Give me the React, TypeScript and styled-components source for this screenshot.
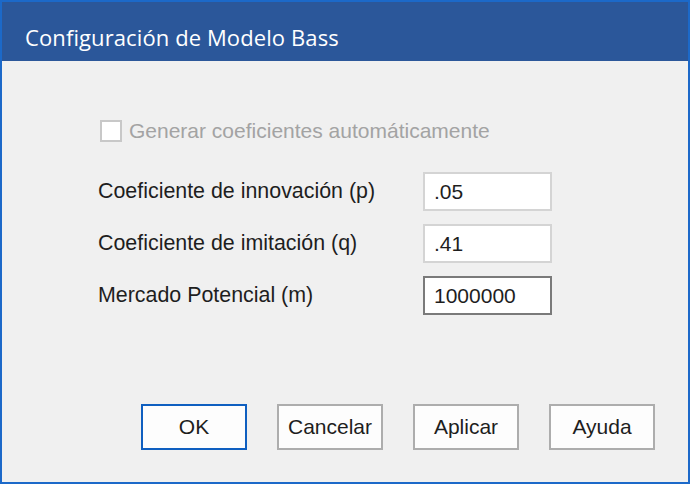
import React, { useState } from 'react'
import styled, { createGlobalStyle } from 'styled-components'

const GlobalStyle = createGlobalStyle`
  html, body {
    margin: 0;
    padding: 0;
    background: #f0f0f0;
  }
  * {
    box-sizing: border-box;
  }
`

const Window = styled.div`
  width: 690px;
  height: 484px;
  border: 2px solid #1c69c9;
  background: #f0f0f0;
  display: flex;
  flex-direction: column;
  font-family: 'Liberation Sans', Arial, sans-serif;
  color: #1e1e1e;
`

const TitleBar = styled.div`
  height: 59px;
  flex-shrink: 0;
  background: #2b579a;
  display: flex;
  align-items: center;
  padding-left: 23px;
  padding-top: 11px;
`

const Title = styled.h1`
  margin: 0;
  font-family: 'Open Sans', 'Noto Sans', sans-serif;
  font-weight: 400;
  font-size: 22px;
  letter-spacing: 0.1px;
  color: #ffffff;
`

const Body = styled.div`
  flex: 1;
  display: flex;
  flex-direction: column;
  padding: 59px 0 0 96px;
`

const CheckRow = styled.label`
  display: flex;
  align-items: center;
  gap: 7px;
  margin-left: 2px;
  height: 22px;
  color: #a3a3a3;
  font-size: 21px;
`

const CheckBox = styled.span`
  width: 22px;
  height: 22px;
  border: 2px solid #c8c8c8;
  background: #ffffff;
`

const Fields = styled.div`
  display: flex;
  flex-direction: column;
  gap: 13px;
  margin-top: 30px;
`

const FieldRow = styled.div`
  display: flex;
  align-items: center;
`

const FieldLabel = styled.span`
  width: 325px;
  font-size: 21.4px;
  color: #1e1e1e;
`

const TextBox = styled.input<{ $active?: boolean }>`
  width: 129px;
  height: 39px;
  border: 2px solid ${p => (p.$active ? '#7a7a7a' : '#d4d4d4')};
  background: #ffffff;
  padding: 0 0 0 9px;
  font-family: 'Liberation Sans', Arial, sans-serif;
  font-size: 21px;
  color: #1e1e1e;
  outline: none;
`

const Buttons = styled.div`
  margin-top: auto;
  display: flex;
  justify-content: flex-end;
  gap: 30px;
  padding: 0 33px 32px 0;
`

const Button = styled.button<{ $default?: boolean }>`
  width: 106px;
  height: 46px;
  background: #fdfdfd;
  border: 2px solid ${p => (p.$default ? '#0f5fc0' : '#adadad')};
  font-family: 'Liberation Sans', Arial, sans-serif;
  font-size: 21px;
  color: #1e1e1e;
  padding: 0;
  cursor: pointer;
`

export default function App() {
  const [p, setP] = useState('.05')
  const [q, setQ] = useState('.41')
  const [m, setM] = useState('1000000')

  return (
    <>
      <GlobalStyle />
      <Window>
        <TitleBar>
          <Title>Configuración de Modelo Bass</Title>
        </TitleBar>
        <Body>
          <CheckRow>
            <CheckBox />
            Generar coeficientes automáticamente
          </CheckRow>
          <Fields>
            <FieldRow>
              <FieldLabel>Coeficiente de innovación (p)</FieldLabel>
              <TextBox value={p} onChange={e => setP(e.target.value)} />
            </FieldRow>
            <FieldRow>
              <FieldLabel>Coeficiente de imitación (q)</FieldLabel>
              <TextBox value={q} onChange={e => setQ(e.target.value)} />
            </FieldRow>
            <FieldRow>
              <FieldLabel>Mercado Potencial (m)</FieldLabel>
              <TextBox $active value={m} onChange={e => setM(e.target.value)} />
            </FieldRow>
          </Fields>
          <Buttons>
            <Button $default>OK</Button>
            <Button>Cancelar</Button>
            <Button>Aplicar</Button>
            <Button>Ayuda</Button>
          </Buttons>
        </Body>
      </Window>
    </>
  )
}
